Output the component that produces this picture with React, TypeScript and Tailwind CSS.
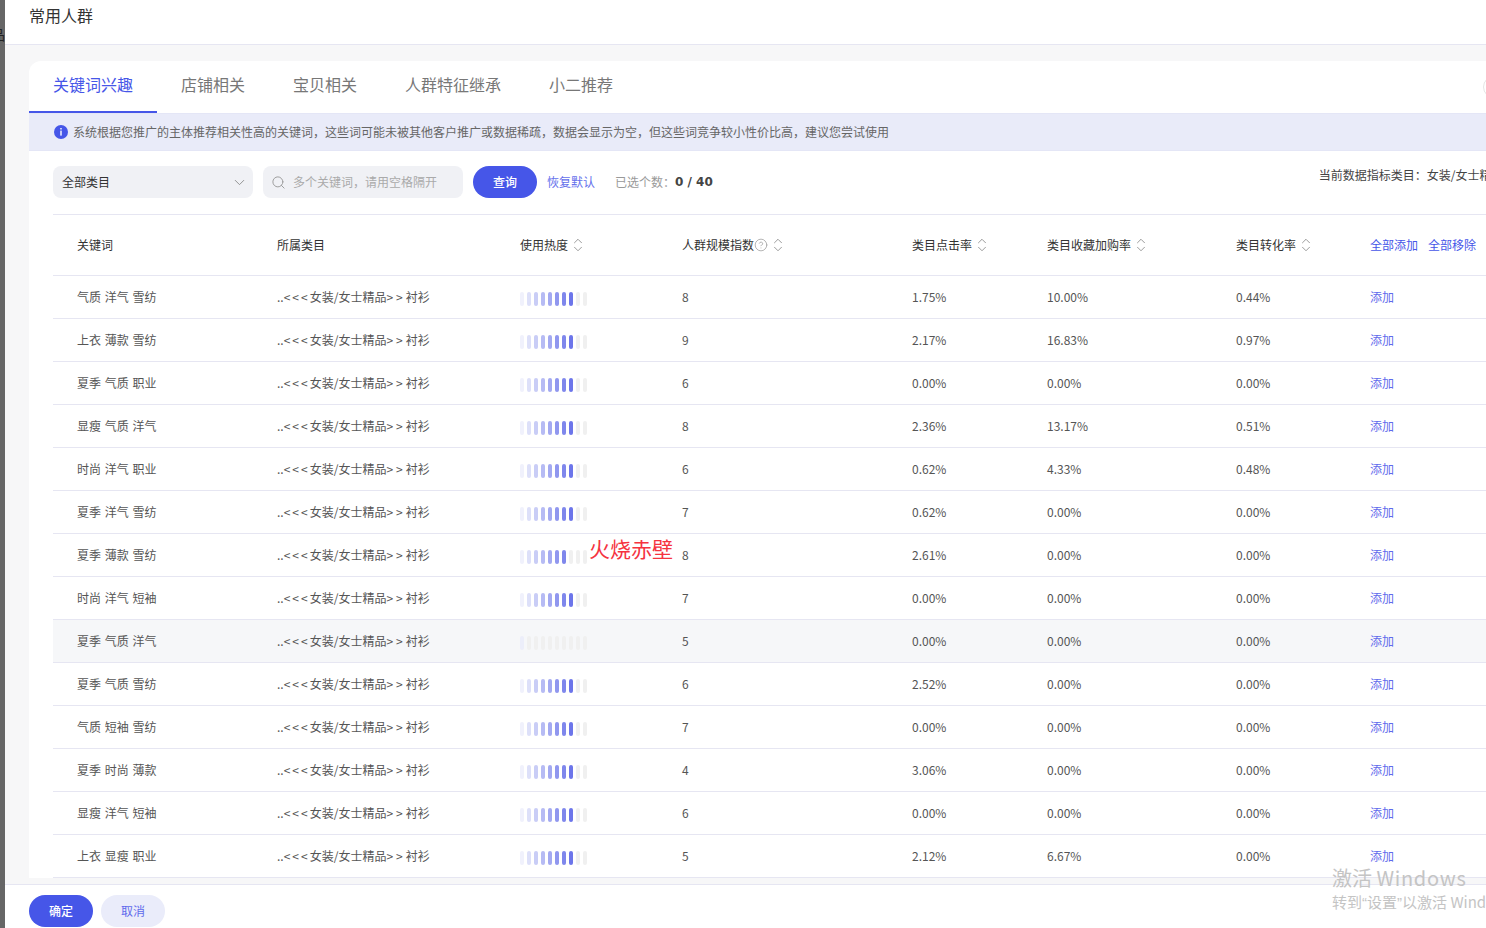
import React from 'react';
import { ChevronDown, ChevronUp, CircleHelp, Search } from 'lucide-react';

const rows = [
  { name: '气质 洋气 雪纺', heat: 8, size: 8, click: '1.75%', fav: '10.00%', conv: '0.44%' },
  { name: '上衣 薄款 雪纺', heat: 8, size: 9, click: '2.17%', fav: '16.83%', conv: '0.97%' },
  { name: '夏季 气质 职业', heat: 8, size: 6, click: '0.00%', fav: '0.00%', conv: '0.00%' },
  { name: '显瘦 气质 洋气', heat: 8, size: 8, click: '2.36%', fav: '13.17%', conv: '0.51%' },
  { name: '时尚 洋气 职业', heat: 8, size: 6, click: '0.62%', fav: '4.33%', conv: '0.48%' },
  { name: '夏季 洋气 雪纺', heat: 8, size: 7, click: '0.62%', fav: '0.00%', conv: '0.00%' },
  { name: '夏季 薄款 雪纺', heat: 7, size: 8, click: '2.61%', fav: '0.00%', conv: '0.00%' },
  { name: '时尚 洋气 短袖', heat: 8, size: 7, click: '0.00%', fav: '0.00%', conv: '0.00%' },
  { name: '夏季 气质 洋气', heat: 1, size: 5, click: '0.00%', fav: '0.00%', conv: '0.00%', hover: true },
  { name: '夏季 气质 雪纺', heat: 8, size: 6, click: '2.52%', fav: '0.00%', conv: '0.00%' },
  { name: '气质 短袖 雪纺', heat: 8, size: 7, click: '0.00%', fav: '0.00%', conv: '0.00%' },
  { name: '夏季 时尚 薄款', heat: 8, size: 4, click: '3.06%', fav: '0.00%', conv: '0.00%' },
  { name: '显瘦 洋气 短袖', heat: 8, size: 6, click: '0.00%', fav: '0.00%', conv: '0.00%' },
  { name: '上衣 显瘦 职业', heat: 8, size: 5, click: '2.12%', fav: '6.67%', conv: '0.00%' },
];

const barColors = ['#f0f1fc', '#dde0f9', '#c9cdf6', '#b6bbf4', '#a3a9f1', '#9097ef', '#7f87ec', '#6c75ea'];

const columns = 'grid grid-cols-[200px_243px_162px_230px_135px_189px_134px_1fr] items-center';

const SortIcon = () => (
  <span className="ml-[3px] inline-flex flex-col text-[#777]">
    <ChevronUp size={14} strokeWidth={1.25} className="-mb-[6px]" />
    <ChevronDown size={14} strokeWidth={1.25} />
  </span>
);

const HeatBar = ({ level, hover }: { level: number; hover?: boolean }) => (
  <div className="mt-[4px] flex gap-[3px]">
    {Array.from({ length: 10 }, (_, i) => (
      <span
        key={i}
        className="h-[14px] w-[4px] rounded-[2px]"
        style={{ backgroundColor: i < level ? (hover ? '#eceefa' : barColors[i]) : '#f0f0f0' }}
      />
    ))}
  </div>
);

export default function App() {
  return (
    <div className="relative flex h-[928px] w-[1486px] overflow-hidden bg-white font-['Noto_Sans_CJK_SC','Liberation_Sans',sans-serif] text-xs text-[#555]">
      {/* page behind the drawer */}
      <div className="relative w-[5px] shrink-0 overflow-hidden bg-[#666]">
        <span className="absolute -left-[9px] top-[24px] text-sm text-[#222]">品</span>
      </div>

      <div className="flex w-[1600px] shrink-0 flex-col">
        <div className="flex h-[45px] shrink-0 border-b border-[#e6e6f2] pl-[24px] pt-[3px] text-base leading-6 text-[#333]">
          常用人群
        </div>

        <div className="min-h-0 flex-1 overflow-hidden bg-[#f7f7f8] pl-[24px] pt-[16px]">
          <div className="rounded-tl-xl bg-white">
            {/* tabs */}
            <div className="flex h-[52px] items-stretch text-base text-[#777]">
              <div className="flex w-[128px] items-center justify-center border-b-2 border-[#4656e8] pb-[5px] text-[#4656e8]">关键词兴趣</div>
              <div className="ml-[24px] flex items-center pb-[7px]">店铺相关</div>
              <div className="ml-[48px] flex items-center pb-[7px]">宝贝相关</div>
              <div className="ml-[48px] flex items-center pb-[7px]">人群特征继承</div>
              <div className="ml-[48px] flex items-center pb-[7px]">小二推荐</div>
              <div className="ml-[870px] flex items-center">
                <span className="h-[22px] w-[22px] rounded-full border border-[#e5e5e5]" />
              </div>
            </div>

            {/* notice */}
            <div className="flex h-[38px] items-center border-y border-[#e4e6f6] bg-[#e9ebf9] pl-[25px] text-[#666]">
              <svg width="14" height="14" viewBox="0 0 14 14" className="mr-[5px] shrink-0">
                <circle cx="7" cy="7" r="7" fill="#4656e8" />
                <rect x="6.3" y="3" width="1.4" height="1.5" fill="#fff" />
                <rect x="6.3" y="5.6" width="1.4" height="5" fill="#fff" />
              </svg>
              系统根据您推广的主体推荐相关性高的关键词，这些词可能未被其他客户推广或数据稀疏，数据会显示为空，但这些词竞争较小性价比高，建议您尝试使用
            </div>

            {/* filters */}
            <div className="ml-[24px] flex h-[64px] items-start border-b border-[#e6e6f2] pt-[15px]">
              <div className="flex h-[32px] w-[200px] items-center justify-between rounded-lg bg-[#f0f1f5] pl-[9px] pr-[5px] text-[#333]">
                全部类目
                <ChevronDown size={17} strokeWidth={1.25} className="text-[#888]" />
              </div>
              <div className="ml-[10px] flex h-[32px] w-[200px] items-center rounded-lg bg-[#f0f1f5] pl-[8px] text-[#aaa]">
                <Search size={15} strokeWidth={1.5} className="mr-[7px] text-[#999]" />
                多个关键词，请用空格隔开
              </div>
              <button className="ml-[10px] h-[32px] w-[64px] rounded-full bg-[#4656e8] font-medium text-white">查询</button>
              <span className="ml-[10px] flex h-[32px] items-center text-[#6570ec]">恢复默认</span>
              <span className="ml-[20px] flex h-[32px] items-center text-[#999]">
                已选个数：
                <b className="font-['DejaVu_Sans',sans-serif] text-xs font-bold text-[#444]">0 / 40</b>
              </span>
              <span className="ml-[606px] -mt-[1px] flex h-[20px] items-center text-[#444]">当前数据指标类目：女装/女士精品&gt;&gt;衬衫</span>
            </div>

            {/* table */}
            <div className="ml-[24px] w-[1500px] leading-[18px]">
              <div className={`${columns} h-[61px] border-b border-[#e6e6f2] text-[#333]`}>
                <div className="pl-[24px]">关键词</div>
                <div className="pl-[24px]">所属类目</div>
                <div className="flex items-center pl-[24px]">使用热度<SortIcon /></div>
                <div className="flex items-center pl-[24px]">
                  人群规模指数
                  <CircleHelp size={14} strokeWidth={1.25} className="text-[#999]" />
                  <SortIcon />
                </div>
                <div className="flex items-center pl-[24px]">类目点击率<SortIcon /></div>
                <div className="flex items-center pl-[24px]">类目收藏加购率<SortIcon /></div>
                <div className="flex items-center pl-[24px]">类目转化率<SortIcon /></div>
                <div className="flex gap-[10px] pl-[24px] text-[#4656e8]">
                  <span>全部添加</span>
                  <span>全部移除</span>
                </div>
              </div>
              {rows.map((row) => (
                <div
                  key={row.name}
                  className={`${columns} h-[43px] border-b border-[#e6e6f2] ${row.hover ? 'bg-[#f6f7f9]' : ''}`}
                >
                  <div className="pl-[24px] [word-spacing:1px]">{row.name}</div>
                  <div className="pl-[24px]">
                    ..<span className="tracking-[2px]">&lt;&lt;&lt;</span>女装/女士精品<span className="tracking-[3px]">&gt;&gt;</span>衬衫
                  </div>
                  <div className="pl-[24px]"><HeatBar level={row.heat} hover={row.hover} /></div>
                  <div className="pl-[24px]">{row.size}</div>
                  <div className="pl-[24px]">{row.click}</div>
                  <div className="pl-[24px]">{row.fav}</div>
                  <div className="pl-[24px]">{row.conv}</div>
                  <div className="pl-[24px] text-[#5f6aec]">添加</div>
                </div>
              ))}
            </div>
          </div>
        </div>

        <div className="flex h-[44px] shrink-0 items-start gap-[8px] border-t border-[#e6e6f2] bg-white pl-[24px] pt-[10px]">
          <button className="h-[32px] w-[64px] rounded-full bg-[#4656e8] font-medium text-white">确定</button>
          <button className="h-[32px] w-[64px] rounded-full bg-[#eaecfa] text-[#5f6aec]">取消</button>
        </div>
      </div>

      {/* text stamped over the screenshot */}
      <div className="absolute left-[589px] top-[533px] text-[21px] leading-[30px] text-[#f5333f]">火烧赤壁</div>
      <div className="pointer-events-none absolute left-[1332px] top-[864px] whitespace-nowrap text-[#c4c4c4]">
        <div className="text-[20px] leading-[28px]">激活 <span className="tracking-[0.7px]">Windows</span></div>
        <div className="text-[15px] leading-[20px]">
          转到<span className="font-['Liberation_Sans',sans-serif]">“</span>设置<span className="font-['Liberation_Sans',sans-serif]">”</span>以激活 Windows。
        </div>
      </div>
    </div>
  );
}
